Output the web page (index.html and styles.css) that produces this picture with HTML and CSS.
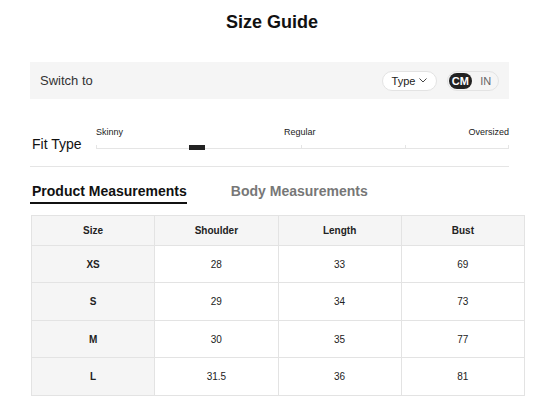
FILE: index.html
```html
<!doctype html>
<html lang="en">
    <head>
        <meta charset="UTF-8" />
        <meta name="viewport" content="width=device-width, initial-scale=1.0" />
        <title>Size Guide</title>
        <link rel="stylesheet" href="styles.css">
    </head>
    <body>
        <div class="container">
            <h1>Size Guide</h1>
            <div class="switch-bar">
                <span class="switch-label">Switch to</span>
                <div class="switch-controls">
                    <button class="type-select">
                        Type
                        <svg width="8" height="5" viewBox="0 0 8 5"><path d="M0.5 0.5 L4 4 L7.5 0.5" fill="none" stroke="#333" stroke-width="0.9"/></svg>
                    </button>
                    <div class="unit-toggle">
                        <span class="unit active">CM</span>
                        <span class="unit">IN</span>
                    </div>
                </div>
            </div>
            <div class="fit-row">
                <div class="fit-label">Fit Type</div>
                <div class="fit-scale">
                    <div class="fit-names">
                        <span>Skinny</span>
                        <span class="fit-mid">Regular</span>
                        <span>Oversized</span>
                    </div>
                    <div class="fit-track">
                        <span class="tick tick-0"></span>
                        <span class="tick tick-50"></span>
                        <span class="tick tick-75"></span>
                        <span class="tick tick-100"></span>
                        <span class="thumb"></span>
                    </div>
                </div>
            </div>
            <div class="tabs">
                <span class="tab active">Product Measurements</span>
                <span class="tab">Body Measurements</span>
            </div>
            <table class="size-table">
                <thead>
                    <tr><th>Size</th><th>Shoulder</th><th>Length</th><th>Bust</th></tr>
                </thead>
                <tbody>
                    <tr><td>XS</td><td>28</td><td>33</td><td>69</td></tr>
                    <tr><td>S</td><td>29</td><td>34</td><td>73</td></tr>
                    <tr><td>M</td><td>30</td><td>35</td><td>77</td></tr>
                    <tr><td>L</td><td>31.5</td><td>36</td><td>81</td></tr>
                </tbody>
            </table>
        </div>
    </body>
</html>
```

FILE: styles.css
```css
body {
    font-family: "Liberation Sans", Arial, sans-serif;
    margin: 0;
    padding: 0;
    background: #ffffff;
    color: #222;
}
.container {
    padding: 0 30px;
}
h1 {
    margin: 11px 0 0;
    font-size: 18px;
    line-height: 22px;
    text-align: center;
    color: #111;
    padding-left: 5px;
}
.switch-bar {
    margin-top: 29px;
    height: 37px;
    background: #f5f5f5;
    display: flex;
    align-items: center;
    justify-content: space-between;
    padding: 0 10px;
}
.switch-label {
    font-size: 13px;
    color: #333;
}
.switch-controls {
    display: flex;
    align-items: center;
    gap: 10px;
}
.type-select {
    width: 55px;
    height: 20px;
    border: 1px solid #e3e3e3;
    border-radius: 10px;
    background: #fff;
    font-family: inherit;
    font-size: 11px;
    color: #222;
    padding: 0;
    display: flex;
    align-items: center;
    justify-content: center;
    gap: 4px;
}
.unit-toggle {
    width: 52px;
    height: 20px;
    box-sizing: border-box;
    border: 1px solid #e3e3e3;
    border-radius: 10px;
    background: #f5f5f5;
    display: flex;
    align-items: center;
    padding: 0 1px;
}
.unit {
    font-size: 11px;
    color: #666;
    width: 24px;
    text-align: center;
}
.unit.active {
    background: #222;
    color: #fff;
    font-weight: bold;
    border-radius: 8px;
    height: 16px;
    line-height: 16px;
    margin-right: 3px;
}
.fit-row {
    display: flex;
    align-items: flex-end;
    padding: 28px 0 17px 2px;
    border-bottom: 1px solid #e5e5e5;
}
.fit-label {
    font-size: 14px;
    width: 64px;
    line-height: 16px;
    margin-bottom: -3px;
    color: #111;
}
.fit-scale {
    flex: 1;
}
.fit-names {
    display: flex;
    justify-content: space-between;
    font-size: 9px;
    color: #222;
    line-height: 11px;
}
.fit-mid {
    margin-left: 8px;
}
.fit-track {
    position: relative;
    height: 1px;
    margin-top: 10px;
    background: #e5e5e5;
}
.tick {
    position: absolute;
    top: -3px;
    width: 1px;
    height: 3px;
    background: #e5e5e5;
}
.tick-0 { left: 0; }
.tick-50 { left: 49.7%; }
.tick-75 { left: 74.9%; }
.tick-100 { right: 0; }
.thumb {
    position: absolute;
    left: 93px;
    top: -3px;
    width: 16px;
    height: 5px;
    background: #222;
}
.tabs {
    display: flex;
    gap: 44px;
    margin-top: 16px;
}
.tab {
    font-size: 14px;
    font-weight: bold;
    color: #777;
    padding: 0 0 4px;
}
.tab.active {
    color: #111;
    border-bottom: 2px solid #111;
    padding: 0 0 3px 2px;
}
.size-table {
    margin-top: 11px;
    margin-left: 1px;
    width: 494px;
    border-collapse: collapse;
    table-layout: fixed;
    font-size: 10px;
}
.size-table th,
.size-table td {
    border: 1px solid #e3e3e3;
    text-align: center;
    padding: 0;
}
.size-table th {
    height: 29px;
    background: #f5f5f5;
    font-weight: bold;
}
.size-table td {
    height: 36px;
    color: #222;
}
.size-table tr:nth-child(even) td {
    height: 37px;
}
.size-table td:first-child {
    background: #f5f5f5;
    font-weight: bold;
}
```
